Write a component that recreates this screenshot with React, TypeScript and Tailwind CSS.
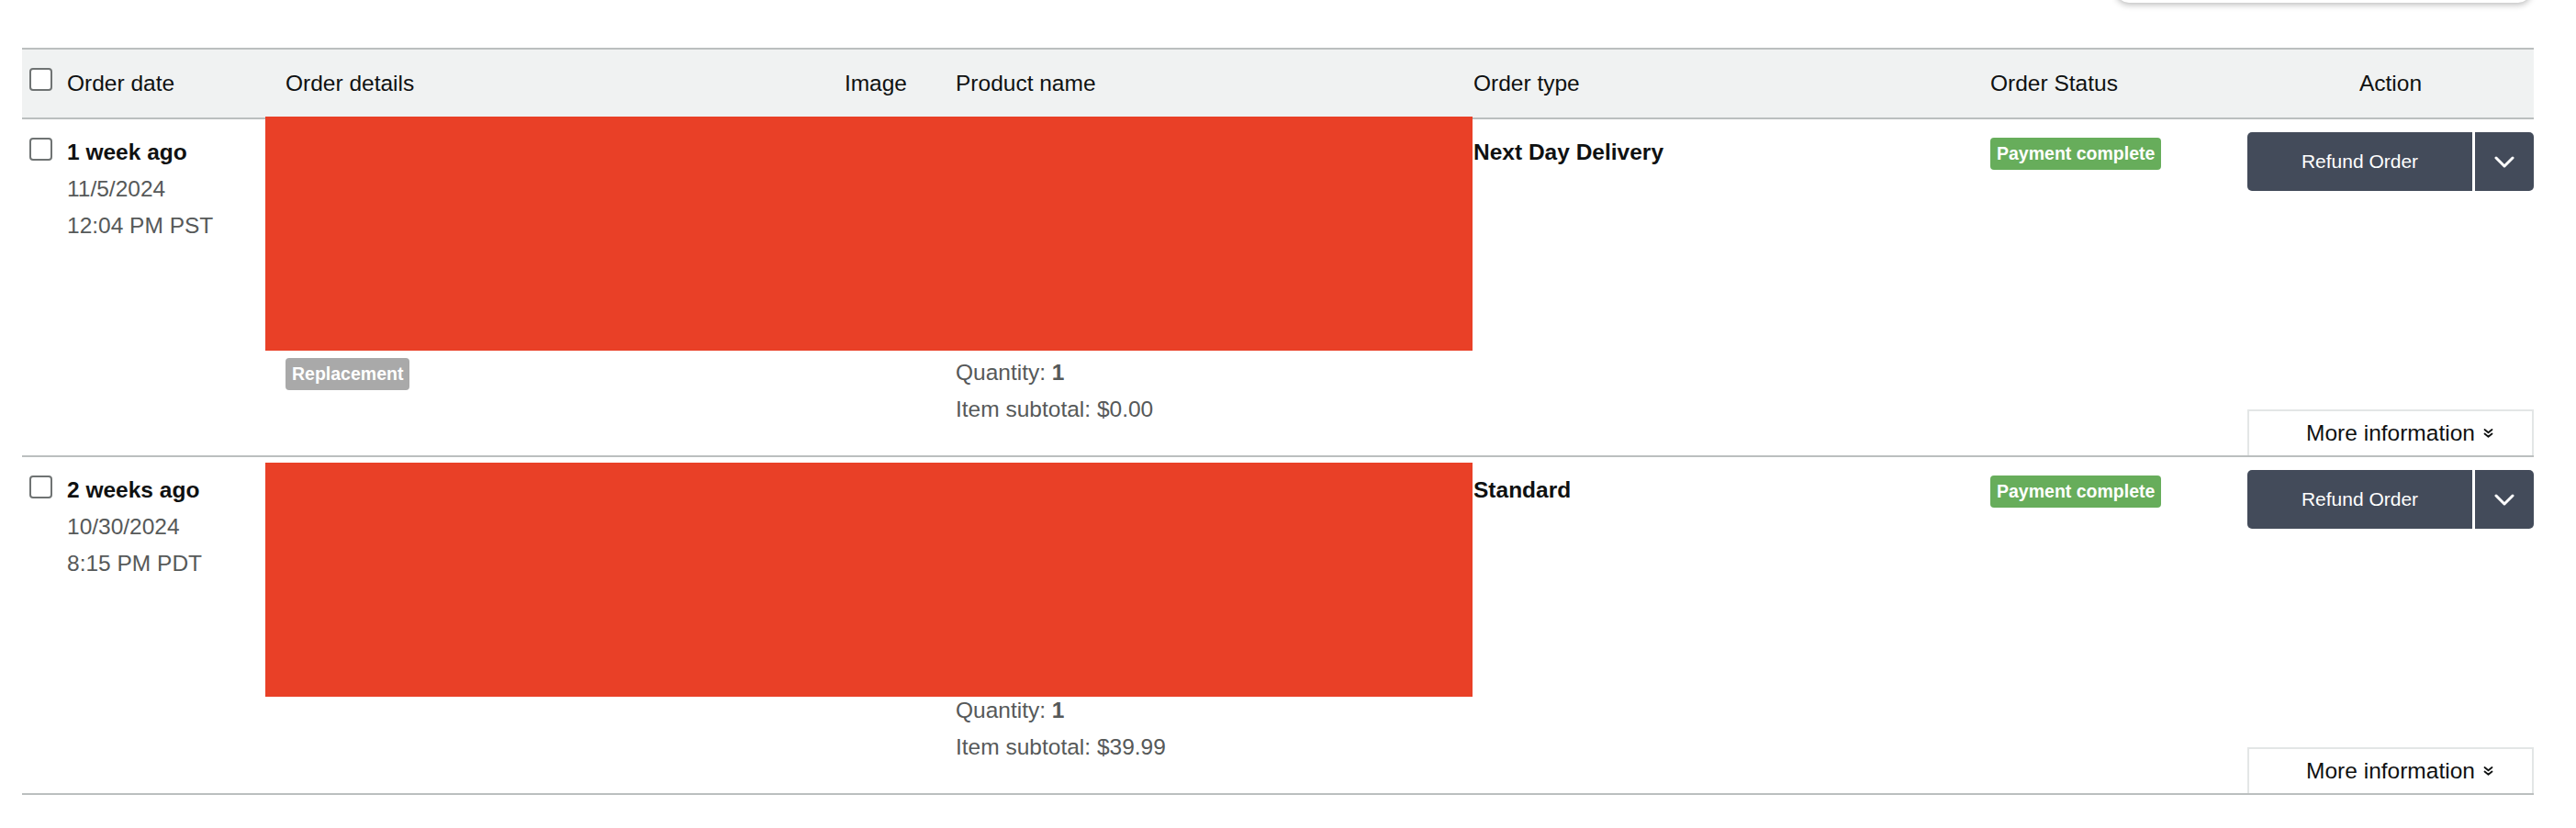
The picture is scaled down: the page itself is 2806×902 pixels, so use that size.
import { type ReactNode } from 'react'

type Order = {
  ago: string
  date: string
  time: string
  orderType: string
  status: string
  subtotal: string
  tag?: string
  redactTop: string
}

const ORDERS: Order[] = [
  {
    ago: '1 week ago',
    date: '11/5/2024',
    time: '12:04 PM PST',
    orderType: 'Next Day Delivery',
    status: 'Payment complete',
    subtotal: '$0.00',
    tag: 'Replacement',
    redactTop: 'top-[-3px]',
  },
  {
    ago: '2 weeks ago',
    date: '10/30/2024',
    time: '8:15 PM PDT',
    orderType: 'Standard',
    status: 'Payment complete',
    subtotal: '$39.99',
    redactTop: 'top-[6px]',
  },
]

const GRID =
  'grid grid-cols-[273px_403px_327px_564px_563px_280px_326px]'

function Checkbox({ className = '' }: { className?: string }) {
  return (
    <input
      type="checkbox"
      className={`h-[25px] w-[25px] shrink-0 appearance-none rounded-[4px] border-2 border-[#6F7373] bg-white ${className}`}
    />
  )
}

function Badge({ color, children }: { color: string; children: ReactNode }) {
  return (
    <span
      className={`inline-flex h-[35px] items-center rounded-[4px] px-[7px] text-[19.5px] font-bold leading-none text-white ${color}`}
    >
      {children}
    </span>
  )
}

function ChevronDown() {
  return (
    <svg width="22" height="13" viewBox="0 0 22 13" fill="none">
      <polyline
        points="2,2 11,11 20,2"
        stroke="white"
        strokeWidth="3"
        strokeLinecap="round"
        strokeLinejoin="round"
      />
    </svg>
  )
}

function DoubleChevron() {
  return (
    <svg width="11" height="10" viewBox="0 0 11 10" fill="none">
      <polyline
        points="1.5,1 5.5,4.2 9.5,1"
        stroke="#0F1111"
        strokeWidth="1.8"
        strokeLinecap="round"
        strokeLinejoin="round"
      />
      <polyline
        points="1.5,5.5 5.5,8.7 9.5,5.5"
        stroke="#0F1111"
        strokeWidth="1.8"
        strokeLinecap="round"
        strokeLinejoin="round"
      />
    </svg>
  )
}

function OrderRow({ order }: { order: Order }) {
  return (
    <div className={`${GRID} relative border-b-2 border-[#BBBFBF]`}>
      {/* redacted order details / image / product name */}
      <div
        className={`absolute left-[265px] h-[255px] w-[1315px] bg-[#E94027] ${order.redactTop}`}
      />

      <div className="flex gap-[16px] pl-[8px] pt-[16px]">
        <Checkbox className="mt-[4px]" />
        <div className="leading-[40px]">
          <p className="font-bold text-[#0F1111]">{order.ago}</p>
          <p className="text-[#565959]">{order.date}</p>
          <p className="text-[#565959]">{order.time}</p>
        </div>
      </div>

      <div className="pl-[14px] pt-[16px]">
        <div className="h-[242px]" />
        {order.tag ? <Badge color="bg-[#A9A9A9]">{order.tag}</Badge> : null}
      </div>

      <div />

      <div className="pb-[30px] pl-[14px] pt-[16px] leading-[40px] text-[#565959]">
        <div className="h-[240px]" />
        <p>
          Quantity: <span className="font-bold">1</span>
        </p>
        <p>Item subtotal: {order.subtotal}</p>
      </div>

      <div className="pl-[14px] pt-[16px] leading-[40px]">
        <p className="font-bold text-[#0F1111]">{order.orderType}</p>
      </div>

      <div className="pl-[14px] pt-[18px]">
        <Badge color="bg-[#67AD5B]">{order.status}</Badge>
      </div>

      <div className="flex flex-col pl-[14px] pt-[14px]">
        <div className="flex h-[64px]">
          <button className="flex flex-1 items-center justify-center rounded-l-[5px] bg-[#434B5A] text-[21px] text-white">
            Refund Order
          </button>
          <button className="ml-[3px] flex w-[64px] items-center justify-center rounded-r-[5px] bg-[#434B5A]">
            <ChevronDown />
          </button>
        </div>
        <button className="mt-auto flex h-[50px] items-center justify-center gap-[9px] border-2 border-b-0 border-[#E3E6E6] bg-white pl-[20px] text-[#0F1111]">
          More information
          <DoubleChevron />
        </button>
      </div>
    </div>
  )
}

export default function App() {
  return (
    <main className="relative min-h-screen overflow-hidden bg-white font-['Liberation_Sans','Arial',sans-serif] text-[24.5px] text-[#0F1111]">
      {/* bottom edge of a popover above the table */}
      <div className="absolute left-[2305px] top-[-40px] h-[43px] w-[452px] rounded-[14px] bg-white shadow-[0_2px_7px_rgba(0,0,0,0.28)]" />

      <div className="pl-[24px] pt-[52px]">
        <div className="w-[2736px]">
          <div
            className={`${GRID} h-[78px] items-center border-y-2 border-[#BBBFBF] bg-[#F0F2F2]`}
          >
            <div className="flex items-center gap-[16px] pl-[8px]">
              <Checkbox className="mb-[9px]" />
              <span>Order date</span>
            </div>
            <div className="pl-[14px]">Order details</div>
            <div className="pr-[39px] text-right">Image</div>
            <div className="pl-[14px]">Product name</div>
            <div className="pl-[14px]">Order type</div>
            <div className="pl-[14px]">Order Status</div>
            <div className="pl-[14px] text-center">Action</div>
          </div>

          {ORDERS.map((order) => (
            <OrderRow key={order.date} order={order} />
          ))}
        </div>
      </div>
    </main>
  )
}
